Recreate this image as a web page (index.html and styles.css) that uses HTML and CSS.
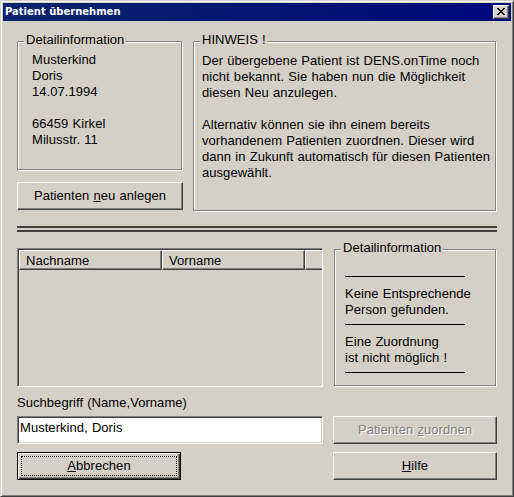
FILE: index.html
```html
<!DOCTYPE html>
<html lang="de">
<head>
<meta charset="utf-8">
<title>Patient übernehmen</title>
<link rel="stylesheet" href="styles.css">
</head>
<body>
<div class="window">
  <div class="titlebar">
    <span class="title">Patient übernehmen</span>
    <span class="caption-btn">
      <svg width="8" height="7" viewBox="0 0 8 7" shape-rendering="crispEdges">
        <path fill="#000" d="M0 0h2v1h-2zM6 0h2v1h-2zM1 1h2v1h-2zM5 1h2v1h-2zM2 2h4v1h-4zM3 3h2v1h-2zM2 4h4v1h-4zM1 5h2v1h-2zM5 5h2v1h-2zM0 6h2v1h-2zM6 6h2v1h-2z"/>
      </svg>
    </span>
  </div>
  <div class="client">
    <div class="top-row">
      <div class="left-col">
        <div class="group group-detail">
          <span class="legend">Detailinformation</span>
          <div class="group-text">Musterkind<br>Doris<br>14.07.1994<br><br>66459 Kirkel<br>Milusstr. 11</div>
        </div>
        <div class="btn btn-new">Patienten&nbsp;<u>n</u>eu anlegen</div>
      </div>
      <div class="group group-hint">
        <span class="legend">HINWEIS !</span>
        <div class="group-text">Der übergebene Patient ist DENS.onTime noch<br>nicht bekannt. Sie haben nun die Möglichkeit<br>diesen Neu anzulegen.<br><br>Alternativ können sie ihn einem bereits<br>vorhandenem Patienten zuordnen. Dieser wird<br>dann in Zukunft automatisch für diesen Patienten<br>ausgewählt.</div>
      </div>
    </div>
    <div class="separator"></div>
    <div class="mid-row">
      <div class="listview">
        <div class="lv-header">
          <div class="lv-col lv-col-name">Nachname</div>
          <div class="lv-col lv-col-first">Vorname</div>
          <div class="lv-col lv-col-rest"></div>
        </div>
      </div>
      <div class="group group-result">
        <span class="legend">Detailinformation</span>
        <div class="rule"></div>
        <div class="result-text">Keine Entsprechende<br>Person gefunden.</div>
        <div class="rule"></div>
        <div class="result-text">Eine Zuordnung<br>ist nicht möglich !</div>
        <div class="rule"></div>
      </div>
    </div>
    <div class="search-label">Suchbegriff (Name,Vorname)</div>
    <div class="search-row">
      <div class="textbox">Musterkind, Doris</div>
      <div class="btn btn-disabled">Patienten&nbsp;<u>z</u>uordnen</div>
    </div>
    <div class="button-row">
      <div class="btn btn-default"><span class="focus-rect"><u>A</u>bbrechen</span></div>
      <div class="btn btn-help"><u>H</u>ilfe</div>
    </div>
  </div>
</div>
</body>
</html>
```

FILE: styles.css
```css
* { box-sizing: border-box; }

html, body {
  margin: 0;
  padding: 0;
  background: #d4d0c8;
}

body {
  font-family: "Liberation Sans", Arial, sans-serif;
  font-size: 13px;
  line-height: 16px;
  letter-spacing: 0.05px;
  word-spacing: 0.5px;
  color: #000;
}

.window {
  width: 514px;
  height: 497px;
  background: #d4d0c8;
  border: 1px solid;
  border-color: #d4d0c8 #404040 #404040 #d4d0c8;
  box-shadow: inset 1px 1px 0 #fff, inset -1px -1px 0 #808080;
  padding: 2px;
  display: flex;
  flex-direction: column;
}

.titlebar {
  height: 18px;
  flex: none;
  background: linear-gradient(to right, #0a246a, #00087c);
  display: flex;
  align-items: center;
  justify-content: space-between;
  padding: 0 2px 0 2px;
}

.title {
  font-family: "DejaVu Sans", Verdana, sans-serif;
  font-weight: bold;
  font-size: 10px;
  line-height: 12px;
  letter-spacing: 0;
  word-spacing: 0;
  color: #fff;
  white-space: nowrap;
}

.caption-btn {
  width: 16px;
  height: 14px;
  background: #d4d0c8;
  border: 1px solid;
  border-color: #fff #404040 #404040 #fff;
  box-shadow: inset -1px -1px 0 #808080;
  display: flex;
  align-items: center;
  justify-content: center;
  padding: 0 1px 1px 0;
}

.caption-btn svg { display: block; }

.client {
  flex: 1;
  padding: 20px 14px 14px 14px;
  display: flex;
  flex-direction: column;
}

/* group boxes */
.group {
  position: relative;
  border: 1px solid #808080;
  box-shadow: 1px 1px 0 #fff, inset 1px 1px 0 #fff;
}

.legend {
  position: absolute;
  top: -10px;
  left: 6px;
  padding: 0 2px;
  background: #d4d0c8;
  white-space: nowrap;
}

.group-text { white-space: nowrap; }

.top-row {
  display: flex;
  gap: 10px;
  height: 170px;
  flex: none;
}

.left-col {
  width: 166px;
  display: flex;
  flex-direction: column;
}

.group-detail {
  width: 165px;
  height: 129px;
  padding: 10px 0 0 14px;
}

.btn {
  height: 28px;
  background: #d4d0c8;
  border: 1px solid;
  border-color: #fff #404040 #404040 #fff;
  box-shadow: inset -1px -1px 0 #808080;
  display: flex;
  align-items: center;
  justify-content: center;
  white-space: nowrap;
  padding-bottom: 1px;
}

.btn-new {
  width: 166px;
  margin-top: 12px;
}

.group-hint {
  width: 303px;
  height: 170px;
  padding: 11px 0 0 8px;
}

.separator {
  flex: none;
  margin-top: 15px;
  height: 6px;
  border-top: 2px solid #404040;
  border-bottom: 2px solid #404040;
}

.mid-row {
  flex: none;
  margin-top: 16px;
  display: flex;
  align-items: flex-start;
}

.listview {
  width: 306px;
  height: 139px;
  border: 1px solid;
  border-color: #808080 #fff #fff #808080;
  box-shadow: inset 1px 1px 0 #404040, inset -1px -1px 0 #d4d0c8;
  padding: 1px;
  overflow: hidden;
}

.lv-header {
  display: flex;
  height: 20px;
}

.lv-col {
  flex: none;
  height: 20px;
  border: 1px solid;
  border-color: #fff #404040 #404040 #fff;
  box-shadow: inset -1px -1px 0 #808080;
  padding: 2px 0 0 6px;
  white-space: nowrap;
}

.lv-col-name { width: 143px; }
.lv-col-first { width: 143px; }
.lv-col-rest { width: 40px; }

.group-result {
  width: 162px;
  height: 137px;
  margin-top: 1px;
  margin-left: 11px;
  padding: 26px 0 0 10px;
}

.rule {
  width: 120px;
  height: 1px;
  background: #000;
}

.result-text {
  margin: 9px 0 6px 0;
  white-space: nowrap;
}

.search-label {
  flex: none;
  margin-top: 8px;
  height: 16px;
}

.search-row {
  flex: none;
  margin-top: 5px;
  display: flex;
  justify-content: space-between;
}

.textbox {
  width: 306px;
  height: 28px;
  background: #fff;
  border: 1px solid;
  border-color: #808080 #fff #fff #808080;
  box-shadow: inset 1px 1px 0 #404040, inset -1px -1px 0 #d4d0c8;
  padding: 3px 0 0 2px;
  white-space: nowrap;
}

.btn-disabled {
  width: 164px;
  color: #808080;
  text-shadow: 1px 1px 0 #fff;
}

.button-row {
  flex: none;
  margin-top: 8px;
  display: flex;
  justify-content: space-between;
}

.btn-default {
  width: 164px;
  border: 1px solid #000;
  box-shadow: inset 1px 1px 0 #fff, inset -1px -1px 0 #404040, inset -2px -2px 0 #808080;
  padding: 3px;
}

.focus-rect {
  flex: 1;
  align-self: stretch;
  border: 1px dotted #000;
  display: flex;
  align-items: center;
  justify-content: center;
}

.btn-help { width: 164px; }
```
